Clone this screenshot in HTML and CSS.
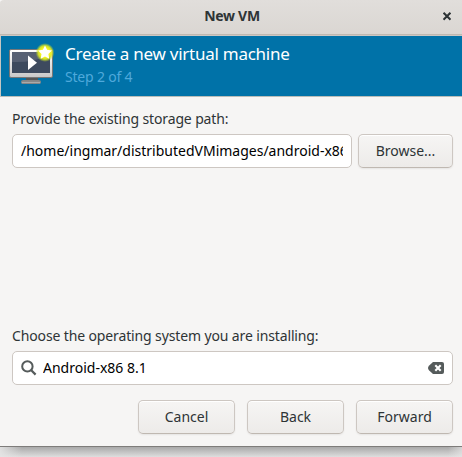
FILE: index.html
```html
<!DOCTYPE html>
<html lang="en">
<head>
<meta charset="utf-8">
<title>New VM</title>
<link rel="stylesheet" href="styles.css">
</head>
<body>
<div class="dialog">
  <header class="titlebar">
    <span class="window-title">New VM</span>
    <svg class="close" width="8" height="9" viewBox="0 0 8 9"><path d="M1 2 7 8M7 2 1 8" stroke="#fff" stroke-opacity=".7" stroke-width="2"/><path d="M.500 .800 7.500 7.800M7.500 .800.500 7.800" stroke="#2e3436" stroke-width="2.200"/></svg>
  </header>
  <section class="banner">
    <svg class="vm-icon" width="48" height="48" viewBox="0 0 48 48">
      <defs>
        <linearGradient id="frame" x2="0" y2="1"><stop stop-color="#fff"/><stop offset="1" stop-color="#c8c8c8"/></linearGradient>
        <linearGradient id="stand" x2="0" y2="1"><stop stop-color="#666"/><stop offset="1" stop-color="#ccc"/></linearGradient>
        <radialGradient id="glow"><stop offset=".5" stop-color="#f5f51c"/><stop offset=".72" stop-color="#dce823" stop-opacity=".9"/><stop offset="1" stop-color="#b4d52a" stop-opacity="0"/></radialGradient>
      </defs>
      <path d="M18 37h12v4H18z" fill="#555"/>
      <rect x="13.500" y="40.500" width="19" height="3" rx="1" fill="url(#stand)" stroke="#858585"/>
      <rect x="1.500" y="9.500" width="43" height="28" rx="1.500" fill="url(#frame)" stroke="#777"/>
      <path d="M4 12h38v21H4z" fill="#3d4a5e"/>
      <path d="M4 12h38v3Q24 23 4 22z" fill="#566073"/>
      <path d="M20 15.500v14.500l9-7.200z" fill="#fff"/>
      <circle cx="37" cy="12.500" r="9.500" fill="url(#glow)"/>
      <path d="m37 5.500 2.100 4.300 4.800.7-3.500 3.400.8 4.800-4.200-2.300-4.300 2.300.8-4.800-3.400-3.400 4.800-.7z" fill="#fff"/>
    </svg>
    <div class="heading">
      <div class="headline">Create a new virtual machine</div>
      <div class="step">Step 2 of 4</div>
    </div>
  </section>
  <main class="content">
    <div class="label path-label">Provide the existing storage path:</div>
    <div class="path-row">
      <div class="entry"><span class="entry-text path-text">/home/ingmar/distributedVMimages/android-x86</span></div>
      <div class="button browse"><span>Browse...</span></div>
    </div>
    <div class="spacer"></div>
    <div class="label os-label">Choose the operating system you are installing:</div>
    <div class="entry search">
      <svg width="16" height="16" viewBox="0 0 16 16"><circle cx="6.400" cy="6.400" r="5.200" fill="none" stroke="#555b5b" stroke-width="2"/><path d="m10 10 4.600 4.600" stroke="#555b5b" stroke-width="2.200"/></svg>
      <span class="entry-text os-text">Android-x86 8.1</span>
      <svg width="16" height="12" viewBox="0 0 16 12"><path d="M5 0h9q2 0 2 2v8q0 2-2 2H5L1.200 8.500Q0 7.200 0 6t1.200-2.500z" fill="#555b5b"/><path d="m7.300 3.300 5.400 5.400m0-5.400L7.300 8.700" stroke="#fff" stroke-width="2.100"/></svg>
    </div>
    <div class="actions">
      <div class="button cancel"><span>Cancel</span></div>
      <div class="button back"><span>Back</span></div>
      <div class="button forward"><span>Forward</span></div>
    </div>
  </main>
</div>
<div class="shadow"></div>
</body>
</html>
```
FILE: styles.css
```css
* { box-sizing: border-box; }
body {
  margin: 0;
  width: 462px;
  height: 457px;
  overflow: hidden;
  background: #d9d9d9;
  font-family: "Noto Sans", sans-serif;
  font-size: 14px;
  line-height: 20px;
  color: #2e3436;
}
svg { display: block; flex: none; }
.dialog {
  height: 447px;
  display: flex;
  flex-direction: column;
  background: #f6f5f4;
  border-bottom: 1px solid #7e7c7a;
}
.titlebar {
  height: 36px;
  flex: none;
  display: grid;
  grid-template-columns: 1fr auto 1fr;
  align-items: center;
  padding: 0 11px 4px 13px;
  background: linear-gradient(#e1dedb, #dad6d2);
  border-bottom: 1px solid #cdc7c2;
  box-shadow: inset 0 -1px #bfb8b1;
  border-top-left-radius: 4px;
}
.window-title { grid-column: 2; font-weight: 700; letter-spacing: -.3px; }
.close { justify-self: end; margin-top: 1px; }
.banner {
  height: 61px;
  flex: none;
  display: flex;
  gap: 8px;
  padding: 4px 0 0 7px;
  background: #0072a8;
  border-left: 1px solid #c5c6c2;
  border-bottom: 1px solid #b9bdb9;
}
.headline {
  margin: 2px 0 0 1px;
  color: #fff;
  font-size: 17px;
  line-height: 24px;
  white-space: nowrap;
  letter-spacing: -.26px;
}
.step { margin: 1px 0 0 1px; color: #4fa9db; line-height: 20px; letter-spacing: -.2px; }
.content {
  flex: 1;
  display: flex;
  flex-direction: column;
  padding: 12px 9px 12px 12px;
}
.label { height: 20px; white-space: nowrap; letter-spacing: -.13px; }
.path-row { display: flex; gap: 6px; margin-top: 5px; }
.entry {
  flex: 1;
  height: 34px;
  display: flex;
  align-items: center;
  padding: 0 8px;
  min-width: 0;
  background: #fff;
  border: 1px solid #cdc7c2;
  border-radius: 5px;
  color: #000;
}
.entry-text { flex: 1; overflow: hidden; white-space: nowrap; }
.button {
  height: 34px;
  width: 97px;
  display: flex;
  align-items: center;
  justify-content: center;
  background: linear-gradient(#f6f5f4, #edebe9);
  border: 1px solid #cdc7c2;
  border-bottom-color: #bfb8b1;
  border-radius: 5px;
  box-shadow: inset 0 1px #fff, 0 1px 2px rgba(0, 0, 0, .07);
}
.browse { width: 95px; }
.spacer { flex: 1; }
.search { flex: none; margin-top: 5px; gap: 6px; }
.actions { display: flex; justify-content: flex-end; gap: 12px; margin-top: 15px; }
.shadow {
  height: 10px;
  background: linear-gradient(90deg, rgba(229, 229, 229, .9), transparent 22px, transparent 448px, rgba(229, 229, 229, .7)), linear-gradient(#a9a9a9, #dedede);
}
```
